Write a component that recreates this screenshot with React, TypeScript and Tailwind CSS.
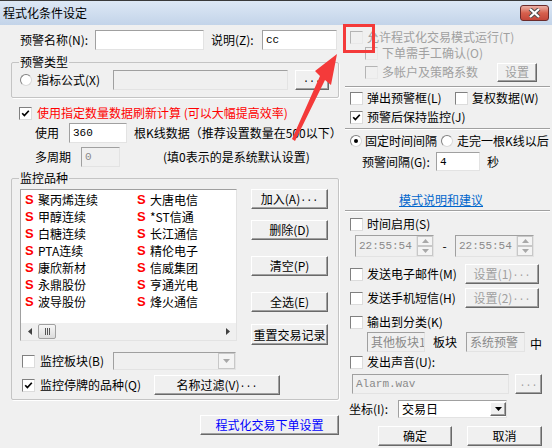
import React from "react";

const edge =
  "border border-t-[#a0a0a0] border-l-[#a0a0a0] border-r-[#e3e3e3] border-b-[#e3e3e3]";
const raised =
  "border border-t-white border-l-white border-r-[#696969] border-b-[#696969] shadow-[inset_-1px_-1px_0_#a0a0a0] bg-[#f0f0f0]";
const mono = "font-['Liberation_Mono',monospace] text-[10px]";

const Check = ({ on, off }: { on?: boolean; off?: boolean }) => (
  <span
    className={`flex h-[13px] w-[13px] shrink-0 items-center justify-center border ${
      off
        ? "border-t-[#b4b4b4] border-l-[#b4b4b4] border-r-[#e8e8e8] border-b-[#e8e8e8] bg-[#f0f0f0]"
        : "border-t-[#808080] border-l-[#808080] border-r-[#dcdcdc] border-b-[#dcdcdc] bg-white"
    }`}
  >
    {on && (
      <svg width="9" height="9" viewBox="0 0 9 9">
        <path d="M1.2 4.2 L3.4 6.6 L7.8 1.8" stroke="#000" strokeWidth="1.7" fill="none" />
      </svg>
    )}
  </span>
);

const Radio = ({ on }: { on?: boolean }) => (
  <span className="flex h-[12px] w-[12px] shrink-0 items-center justify-center rounded-full border border-t-[#808080] border-l-[#808080] border-r-[#d8d8d8] border-b-[#d8d8d8] bg-white">
    {on && <span className="h-[4px] w-[4px] rounded-full bg-black" />}
  </span>
);

const Btn = ({
  children,
  className = "",
}: {
  children?: React.ReactNode;
  className?: string;
}) => (
  <div className={`flex items-center justify-center whitespace-nowrap ${raised} ${className}`}>{children}</div>
);

const Field = ({
  children,
  className = "",
}: {
  children?: React.ReactNode;
  className?: string;
}) => (
  <div className={`flex items-center overflow-hidden whitespace-nowrap pl-[3px] ${edge} ${className}`}>
    {children}
  </div>
);

const Tri = ({ up, color = "#000" }: { up?: boolean; color?: string }) => (
  <svg width="7" height="4" viewBox="0 0 7 4">
    <path d={up ? "M0 4 L3.5 0 L7 4 Z" : "M0 0 L7 0 L3.5 4 Z"} fill={color} />
  </svg>
);

const Spin = () => (
  <div className="flex h-full w-[17px] flex-col border-l border-[#e3e3e3]">
    <div className="flex flex-1 items-center justify-center border border-[#c8c8c8] bg-[#f4f4f4]">
      <Tri up color="#a8a8a8" />
    </div>
    <div className="flex flex-1 items-center justify-center border border-[#c8c8c8] bg-[#f4f4f4]">
      <Tri color="#a8a8a8" />
    </div>
  </div>
);

const col1 = ["聚丙烯连续", "甲醇连续", "白糖连续", "PTA连续", "康欣新材", "永鼎股份", "波导股份"];
const col2 = ["大唐电信", "*ST信通", "长江通信", "精伦电子", "信威集团", "亨通光电", "烽火通信"];

const Item = ({ name }: { name: string }) => (
  <div className="flex h-[17px] items-center">
    <span className="w-[13px] font-['Liberation_Sans',sans-serif] text-[13px] font-bold text-[#ff0000]">
      S
    </span>
    <span>{name}</span>
  </div>
);

export default function App() {
  return (
    <div className="relative h-[448px] w-[552px] overflow-hidden bg-[#f0f0f0] font-['Noto_Sans_CJK_SC',sans-serif] text-[12px] leading-[14px] text-black">
      {/* title bar */}
      <div className="flex h-[25px] items-center justify-between border-t border-[#3a3a3a] bg-gradient-to-b from-[#dde8f5] to-[#c3d4e9] pl-[3px] pr-[3px]">
        <span>程式化条件设定</span>
        <div className="flex h-[16px] w-[29px] items-center justify-center rounded-[3px] border border-[#6b2b2b] bg-gradient-to-b from-[#eab0a6] via-[#d6604d] to-[#c4473a]">
          <svg width="13" height="10" viewBox="0 0 13 10">
            <path d="M2 1 L11 9 M11 1 L2 9" stroke="#4a4a4a" strokeWidth="4" />
            <path d="M2 1 L11 9 M11 1 L2 9" stroke="#fff" strokeWidth="2.2" />
          </svg>
        </div>
      </div>

      <div className="flex">
        {/* left column */}
        <div className="flex w-[345px] shrink-0 flex-col">
          <div className="mt-[5px] flex h-[20px] items-center pl-[20px]">
            <span className="w-[75px]">预警名称(N):</span>
            <Field className="h-[20px] w-[109px] bg-white" />
            <span className="ml-[7px] w-[51px]">说明(Z):</span>
            <Field className={`h-[20px] w-[75px] bg-white ${mono} text-[11px]`}>cc</Field>
          </div>

          <fieldset className="ml-[11px] mt-[4px] w-[328px] rounded-[2px] border border-[#c4c4c4] pb-[7px] shadow-[1px_1px_0_#fff]">
            <legend className="ml-[7px] h-[16px] px-[1px] leading-[16px]">预警类型</legend>
            <div className="flex h-[20px] items-center pl-[8px]">
              <Radio />
              <span className="ml-[5px] w-[76px]">指标公式(X)</span>
              <Field className="h-[20px] w-[175px] bg-[#f0f0f0]" />
              <Btn className={`ml-[7px] h-[20px] w-[34px] ${mono}`}>...</Btn>
            </div>
          </fieldset>

          <div className="mt-[8px] flex h-[14px] items-center pl-[19px]">
            <Check on />
            <span className="ml-[5px] text-[#ff0000]">使用指定数量数据刷新计算 (可以大幅提高效率)</span>
          </div>

          <div className="mt-[3px] flex h-[20px] items-center pl-[35px]">
            <span className="w-[34px]">使用</span>
            <Field className={`h-[20px] w-[58px] bg-white ${mono} text-[11px]`}>360</Field>
            <span className="ml-[7px]">根K线数据（推荐设置数量在500以下）</span>
          </div>

          <div className="mt-[4px] flex h-[20px] items-center pl-[35px]">
            <span className="w-[46px]">多周期</span>
            <Field className={`h-[20px] w-[39px] bg-[#f0f0f0] text-[#8a8a8a] ${mono} text-[11px]`}>0</Field>
            <span className="ml-[43px]">(填0表示的是系统默认设置)</span>
          </div>

          <fieldset className="ml-[11px] mt-[3px] w-[328px] rounded-[2px] border border-[#c4c4c4] pb-[4px] shadow-[1px_1px_0_#fff]">
            <legend className="ml-[7px] h-[16px] px-[1px] leading-[16px]">监控品种</legend>
            <div className="mt-[3px] flex items-start">
              <div className={`ml-[8px] flex h-[152px] w-[217px] flex-col bg-white ${edge}`}>
                <div className="grid flex-1 grid-cols-[112px_1fr] pl-[4px] pt-[1px]">
                  <div>
                    {col1.map((n) => (
                      <Item key={n} name={n} />
                    ))}
                  </div>
                  <div>
                    {col2.map((n) => (
                      <Item key={n} name={n} />
                    ))}
                  </div>
                </div>
                <div className="flex h-[17px] items-center bg-[#f0f0f0]">
                  <div className="flex h-full w-[17px] items-center justify-center">
                    <svg width="4" height="7" viewBox="0 0 4 7">
                      <path d="M4 0 L0 3.5 L4 7 Z" fill="#404040" />
                    </svg>
                  </div>
                  <div className="flex h-[15px] w-[18px] items-center justify-center gap-[1px] rounded-[2px] border border-[#a0a0a0] bg-gradient-to-b from-[#f6f6f6] to-[#dcdcdc]">
                    <span className="h-[7px] w-[1px] bg-[#555]" />
                    <span className="h-[7px] w-[1px] bg-[#555]" />
                    <span className="h-[7px] w-[1px] bg-[#555]" />
                  </div>
                  <div className="flex-1" />
                  <div className="flex h-full w-[17px] items-center justify-center">
                    <svg width="4" height="7" viewBox="0 0 4 7">
                      <path d="M0 0 L4 3.5 L0 7 Z" fill="#404040" />
                    </svg>
                  </div>
                </div>
              </div>
              <div className="ml-[14px] flex w-[77px] flex-col">
                <Btn className="h-[20px]">
                  加入(A)<span className={mono}>...</span>
                </Btn>
                <Btn className="mt-[11px] h-[20px]">删除(D)</Btn>
                <Btn className="mt-[16px] h-[20px]">清空(P)</Btn>
                <Btn className="mt-[16px] h-[20px]">全选(E)</Btn>
                <Btn className="mt-[12px] h-[21px]">重置交易记录</Btn>
              </div>
            </div>

            <div className="mt-[7px] flex h-[18px] items-center pl-[10px]">
              <Check />
              <span className="ml-[5px] w-[73px]">监控板块(B)</span>
              <div className={`flex h-[18px] w-[123px] items-center justify-end bg-[#f0f0f0] ${edge}`}>
                <div className="flex h-[16px] w-[17px] items-center justify-center border border-[#c8c8c8] bg-[#f4f4f4]">
                  <Tri color="#a8a8a8" />
                </div>
              </div>
            </div>

            <div className="mt-[5px] flex h-[20px] items-center pl-[10px]">
              <Check on />
              <span className="ml-[5px] w-[114px]">监控停牌的品种(Q)</span>
              <Btn className="h-[20px] w-[126px]">
                名称过滤(V)<span className={mono}>...</span>
              </Btn>
            </div>
          </fieldset>

          <Btn className="ml-[200px] mt-[15px] h-[20px] w-[139px] text-[#0000ff]">程式化交易下单设置</Btn>
        </div>

        {/* right column */}
        <div className="flex flex-1 flex-col">
          <div className="mt-[5px] flex h-[14px] items-center pl-[5px] text-[#a0a0a0]">
            <Check off />
            <span className="ml-[4px]">允许程式化交易模式运行(T)</span>
          </div>
          <div className="mt-[2px] flex h-[14px] items-center pl-[20px] text-[#a0a0a0]">
            <Check off />
            <span className="ml-[4px]">下单需手工确认(O)</span>
          </div>
          <div className="mt-[3px] flex h-[18px] items-center pl-[20px] text-[#a0a0a0]">
            <Check off />
            <span className="ml-[4px] w-[115px]">多帐户及策略系数</span>
            <Btn className="h-[19px] w-[40px]">设置</Btn>
          </div>

          <div className="mt-[5px] h-[2px] w-[205px] border-t border-b border-t-[#a0a0a0] border-b-white" />

          <div className="mt-[3px] flex h-[14px] items-center pl-[5px]">
            <Check />
            <span className="ml-[4px] w-[88px]">弹出预警框(L)</span>
            <Check />
            <span className="ml-[4px]">复权数据(W)</span>
          </div>
          <div className="mt-[5px] flex h-[14px] items-center pl-[5px]">
            <Check on />
            <span className="ml-[4px]">预警后保持监控(J)</span>
          </div>

          <div className="mt-[4px] h-[2px] w-[205px] border-t border-b border-t-[#a0a0a0] border-b-white" />

          <div className="mt-[4px] flex h-[14px] items-center pl-[5px]">
            <Radio on />
            <span className="ml-[3px] w-[76px]">固定时间间隔</span>
            <Radio />
            <span className="ml-[4px]">走完一根K线以后</span>
          </div>
          <div className="mt-[4px] flex h-[19px] items-center pl-[17px]">
            <span className="w-[74px]">预警间隔(G):</span>
            <Field className={`h-[19px] w-[44px] bg-white ${mono} text-[11px]`}>4</Field>
            <span className="ml-[7px]">秒</span>
          </div>

          <div className="mt-[22px] flex h-[14px] items-center pl-[54px]">
            <span className="text-[#0066cc] underline">模式说明和建议</span>
          </div>

          <div className="mt-[3px] h-[2px] w-[205px] border-t border-b border-t-[#a0a0a0] border-b-white" />

          <div className="mt-[5px] flex h-[14px] items-center pl-[5px]">
            <Check />
            <span className="ml-[4px]">时间启用(S)</span>
          </div>
          <div className="mt-[4px] flex h-[22px] items-center pl-[10px]">
            <div className={`flex h-[22px] w-[79px] items-center bg-[#f0f0f0] ${edge}`}>
              <span className={`flex-1 pl-[3px] text-[#8a8a8a] ${mono} text-[11px]`}>22:55:54</span>
              <Spin />
            </div>
            <span className="w-[21px] text-center">-</span>
            <div className={`flex h-[22px] w-[79px] items-center bg-[#f0f0f0] ${edge}`}>
              <span className={`flex-1 pl-[3px] text-[#8a8a8a] ${mono} text-[11px]`}>22:55:54</span>
              <Spin />
            </div>
          </div>

          <div className="mt-[7px] flex h-[20px] items-center pl-[5px]">
            <Check />
            <span className="ml-[4px] w-[98px]">发送电子邮件(M)</span>
            <Btn className="h-[20px] w-[74px] text-[#a0a0a0]">
              设置(1)<span className={mono}>...</span>
            </Btn>
          </div>
          <div className="mt-[4px] flex h-[20px] items-center pl-[5px]">
            <Check />
            <span className="ml-[4px] w-[98px]">发送手机短信(H)</span>
            <Btn className="h-[20px] w-[74px] text-[#a0a0a0]">
              设置(2)<span className={mono}>...</span>
            </Btn>
          </div>

          <div className="mt-[7px] flex h-[14px] items-center pl-[5px]">
            <Check />
            <span className="ml-[4px]">输出到分类(K)</span>
          </div>
          <div className="mt-[3px] flex h-[20px] items-center pl-[22px]">
            <Field className="h-[20px] w-[58px] bg-[#f0f0f0] pl-[1px] text-[#8a8a8a]">其他板块1</Field>
            <span className="ml-[8px] w-[33px]">板块</span>
            <Field className="h-[20px] w-[59px] bg-[#f0f0f0] pl-[1px] text-[#8a8a8a]">系统预警</Field>
            <span className="ml-[5px] mt-[4px]">中</span>
          </div>

          <div className="mt-[3px] flex h-[14px] items-center pl-[5px]">
            <Check />
            <span className="ml-[4px]">发出声音(U):</span>
          </div>
          <div className="mt-[5px] flex h-[20px] items-center pl-[7px]">
            <Field className={`h-[20px] w-[157px] bg-[#f0f0f0] text-[#8a8a8a] ${mono} text-[11px]`}>Alarm.wav</Field>
            <Btn className={`ml-[6px] h-[20px] w-[27px] text-[#a0a0a0] ${mono}`}>...</Btn>
          </div>

          <div className="mt-[6px] flex h-[18px] items-center pl-[4px]">
            <span className="w-[49px]">坐标(I):</span>
            <div className={`flex h-[18px] w-[109px] items-center bg-white pl-[3px] ${edge}`}>
              <span className="flex-1">交易日</span>
              <div className={`flex h-[14px] w-[16px] items-center justify-center ${raised}`}>
                <Tri />
              </div>
            </div>
          </div>

          <div className="mt-[8px] flex h-[20px] items-center pl-[33px]">
            <Btn className="h-[20px] w-[74px]">确定</Btn>
            <Btn className="ml-[15px] h-[20px] w-[75px]">取消</Btn>
          </div>
        </div>
      </div>

      {/* annotation overlay */}
      <svg className="pointer-events-none absolute left-0 top-0" width="552" height="448">
        <rect x="344.5" y="25.5" width="29" height="26" fill="none" stroke="#f43a3a" strokeWidth="3" />
        <polygon points="337,54 331,85 325,80 295,141 292,139 320,76 315,71" fill="#f43a3a" />
      </svg>
    </div>
  );
}
